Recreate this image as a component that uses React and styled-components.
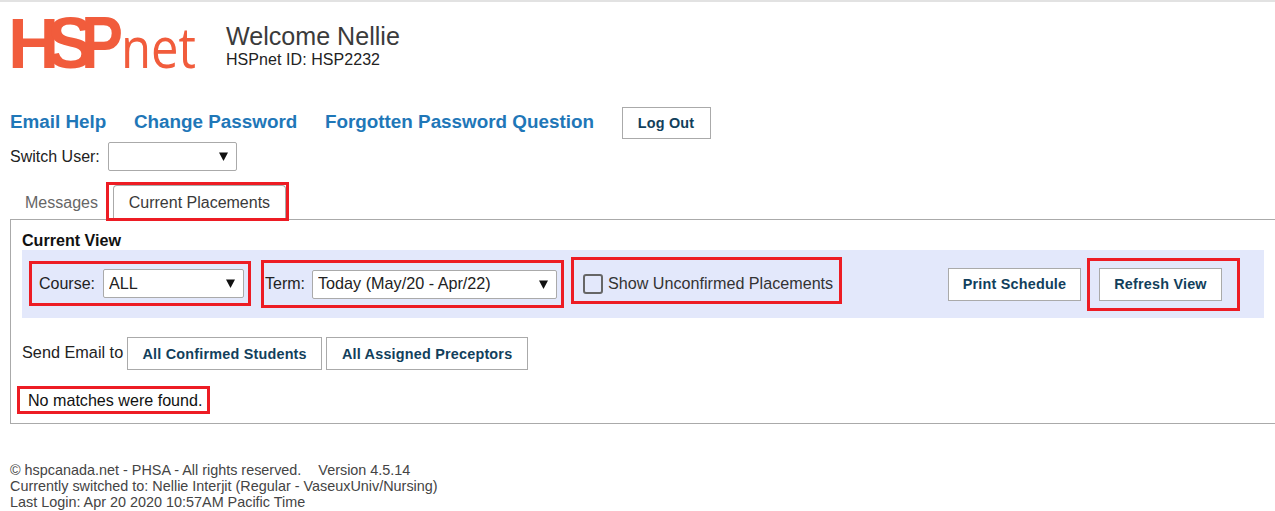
import React from 'react';
import styled, { createGlobalStyle } from 'styled-components';

const GlobalStyle = createGlobalStyle`
  html, body {
    margin: 0;
    padding: 0;
    background: #fff;
  }
  body {
    font-family: "Liberation Sans", Arial, sans-serif;
    font-size: 16.15px;
    color: #222;
  }
`;

const Page = styled.div`
  width: 1275px;
  height: 511px;
  overflow: hidden;
  border-top: 2px solid #e2e2e2;
  box-sizing: border-box;
`;

const Header = styled.header`
  display: flex;
  align-items: flex-start;
  padding: 2px 0 0 8px;
  height: 74px;
  box-sizing: content-box;
`;

const LogoSvg = styled.svg`
  width: 190px;
  height: 84px;
  flex: none;
`;

const Welcome = styled.div`
  margin: 18px 0 0 28px;
`;

const WelcomeTitle = styled.h1`
  margin: 0;
  font-size: 25.1px;
  font-weight: 400;
  line-height: 28px;
  color: #3b3b3b;
`;

const WelcomeId = styled.div`
  font-size: 16px;
  letter-spacing: 0.06px;
  line-height: 19px;
  color: #222;
`;

const NavRow = styled.nav`
  display: flex;
  align-items: center;
  margin: 29px 0 0 10px;
  height: 32px;
`;

const NavLink = styled.a`
  font-size: 18.85px;
  font-weight: 700;
  color: #1f77b8;
  text-decoration: none;
  margin: -3px 27.6px 0 0;
  cursor: pointer;
`;

const Button = styled.button`
  display: block;
  flex: none;
  box-sizing: border-box;
  width: ${(props) => props.width}px;
  height: ${(props) => props.height || 33}px;
  padding: 0;
  background: #fff;
  border: 1px solid #aaa;
  border-radius: 0;
  font-family: inherit;
  font-size: 14.4px;
  font-weight: 700;
  letter-spacing: 0.2px;
  color: #123f5c;
  cursor: pointer;
`;

const SwitchRow = styled.div`
  display: flex;
  align-items: center;
  margin: 3px 0 0 10px;
  height: 29px;
  gap: 8px;
`;

const Label = styled.label`
  font-size: 16px;
  color: #222;
`;

const SelectWrap = styled.div`
  position: relative;
  width: ${(props) => props.width}px;
  height: 29px;
  flex: none;
`;

const Select = styled.select`
  appearance: none;
  display: block;
  width: 100%;
  height: 100%;
  box-sizing: border-box;
  padding: 0 24px 2px 5px;
  background: #fff;
  border: 1px solid #aaa;
  border-radius: 2px;
  font-family: inherit;
  font-size: 16.2px;
  color: #222;
`;

const Arrow = styled.svg`
  position: absolute;
  right: 9px;
  top: 10px;
  width: 9px;
  height: 9px;
  pointer-events: none;
`;

const TabRow = styled.div`
  display: flex;
  align-items: flex-end;
  margin: 11px 0 -2px 10px;
  height: 39px;
  position: relative;
  z-index: 1;
`;

const TabLabel = styled.div`
  padding: 0 8px 0 15px;
  height: 34px;
  line-height: 32px;
  font-size: 16px;
  color: #666;
`;

const Highlight = styled.div`
  box-sizing: border-box;
  border: 3px solid #ed1c24;
  flex: none;
  display: flex;
  align-items: center;
`;

const TabHighlight = styled(Highlight)`
  width: 183px;
  height: 39px;
  align-items: flex-end;
  padding: 0 0 0 4px;
`;

const ActiveTab = styled.div`
  flex: 1;
  height: 33px;
  box-sizing: border-box;
  border: 1px solid #aaa;
  border-bottom: none;
  border-radius: 4px 4px 0 0;
  background: #fff;
  text-align: center;
  font-size: 16px;
  line-height: 33px;
  color: #3a3a3a;
`;

const Panel = styled.section`
  box-sizing: border-box;
  margin-left: 10px;
  height: 205px;
  border: 1px solid #aaa;
  border-right: none;
  padding: 11px 11px 0 11px;
`;

const PanelTitle = styled.h2`
  margin: 0;
  font-size: 16.1px;
  font-weight: 700;
  line-height: 19px;
  color: #111;
`;

const FilterBar = styled.div`
  display: flex;
  align-items: center;
  height: 68px;
  background: #e3e8fb;
  padding: 0 24px 0 7px;
`;

const CourseBox = styled(Highlight)`
  width: 222px;
  height: 45px;
  padding-left: 7px;
  gap: 8px;
  margin-top: -1px;
`;

const TermBox = styled(Highlight)`
  width: 303px;
  height: 48px;
  margin-left: 10px;
  padding-left: 1px;
  gap: 7px;
`;

const CheckBox = styled(Highlight)`
  width: 271px;
  height: 47px;
  margin: -7px 0 0 7px;
  padding: 6px 0 0 9px;
  gap: 5px;
  color: #333;
`;

const CheckMark = styled.input`
  appearance: none;
  margin: 0;
  width: 20px;
  height: 20px;
  box-sizing: border-box;
  border: 2px solid #666;
  border-radius: 3px;
  background: #e3e8fb;
  flex: none;
`;

const BarActions = styled.div`
  display: flex;
  align-items: center;
  margin-left: auto;
`;

const RefreshBox = styled(Highlight)`
  width: 153px;
  height: 53px;
  margin-left: 6px;
  padding-left: 9px;
`;

const EmailRow = styled.div`
  display: flex;
  align-items: center;
  gap: 4px;
  margin-top: 19px;
  color: #222;
`;

const EmailLabel = styled.span`
  margin: -2px 0 0 0;
  font-size: 16.25px;
`;

const Message = styled(Highlight)`
  width: 193px;
  height: 28px;
  margin: 16px 0 0 -5px;
  padding: 0 0 0 8px;
  font-size: 16.1px;
  color: #111;
`;

const Footer = styled.footer`
  margin: 38px 0 0 10px;
  font-size: 14.4px;
  line-height: 16px;
  color: #444;
`;

const Version = styled.span`
  margin-left: 13px;
`;

const LOGO_FILL = '#f15c3c';

const Logo = () => (
  <LogoSvg viewBox="0 0 190 84" role="img" aria-label="HSPnet">
    <g fontFamily="'Liberation Sans', sans-serif" fontWeight="700" fill={LOGO_FILL}>
      <text x="0" y="64" fontSize="71">H</text>
      <text x="39" y="64" fontSize="72" textLength="47" lengthAdjust="spacingAndGlyphs">S</text>
      <text x="73" y="64" fontSize="75" textLength="42" lengthAdjust="spacingAndGlyphs">P</text>
    </g>
    <text x="113" y="64" fontFamily="'Open Sans', sans-serif" fontWeight="400" fontSize="56" fill={LOGO_FILL} textLength="75" lengthAdjust="spacingAndGlyphs">net</text>
  </LogoSvg>
);

const SelectField = ({ width, value }) => (
  <SelectWrap width={width}>
    <Select defaultValue={value}>
      <option>{value}</option>
    </Select>
    <Arrow viewBox="0 0 9 9">
      <path d="M0 0.5h9L4.5 9z" fill="#111" />
    </Arrow>
  </SelectWrap>
);

const App = () => (
  <Page>
    <GlobalStyle />
    <Header>
      <Logo />
      <Welcome>
        <WelcomeTitle>Welcome Nellie</WelcomeTitle>
        <WelcomeId>HSPnet ID: HSP2232</WelcomeId>
      </Welcome>
    </Header>

    <NavRow>
      <NavLink>Email Help</NavLink>
      <NavLink>Change Password</NavLink>
      <NavLink>Forgotten Password Question</NavLink>
      <Button width={89} height={32}>Log Out</Button>
    </NavRow>

    <SwitchRow>
      <Label>Switch User:</Label>
      <SelectField width={129} value="" />
    </SwitchRow>

    <TabRow>
      <TabLabel>Messages</TabLabel>
      <TabHighlight>
        <ActiveTab>Current Placements</ActiveTab>
      </TabHighlight>
    </TabRow>

    <Panel>
      <PanelTitle>Current View</PanelTitle>
      <FilterBar>
        <CourseBox>
          <Label>Course:</Label>
          <SelectField width={141} value="ALL" />
        </CourseBox>
        <TermBox>
          <Label>Term:</Label>
          <SelectField width={245} value="Today (May/20 - Apr/22)" />
        </TermBox>
        <CheckBox>
          <CheckMark type="checkbox" id="unconfirmed" />
          <label htmlFor="unconfirmed">Show Unconfirmed Placements</label>
        </CheckBox>
        <BarActions>
          <Button width={133}>Print Schedule</Button>
          <RefreshBox>
            <Button width={123}>Refresh View</Button>
          </RefreshBox>
        </BarActions>
      </FilterBar>
      <EmailRow>
        <EmailLabel>Send Email to</EmailLabel>
        <Button width={195}>All Confirmed Students</Button>
        <Button width={202}>All Assigned Preceptors</Button>
      </EmailRow>
      <Message>No matches were found.</Message>
    </Panel>

    <Footer>
      <div>© hspcanada.net - PHSA - All rights reserved. <Version>Version 4.5.14</Version></div>
      <div>Currently switched to: Nellie Interjit (Regular - VaseuxUniv/Nursing)</div>
      <div>Last Login: Apr 20 2020 10:57AM Pacific Time</div>
    </Footer>
  </Page>
);

export default App;
